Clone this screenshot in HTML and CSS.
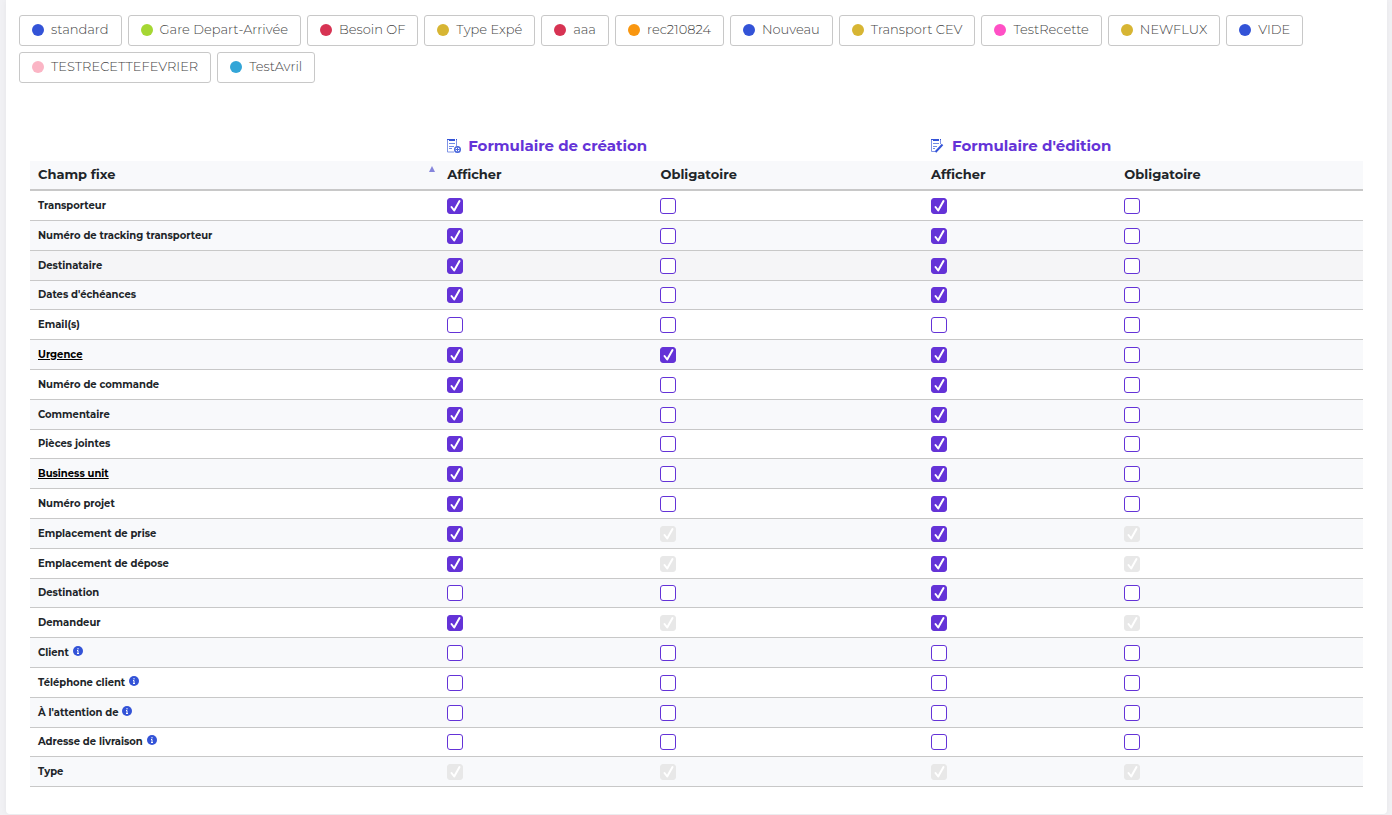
FILE: index.html
```html
<!DOCTYPE html>
<html lang="fr">
<head>
<meta charset="utf-8">
<title>Champs fixes</title>
<link rel="stylesheet" href="styles.css">
</head>
<body>
<main class="card">
  <nav class="types" aria-label="Types" id="types"></nav>
  <table class="fields">
    <colgroup><col class="col-name"><col class="col-show"><col class="col-required"><col class="col-edit-show"><col></colgroup>
    <thead>
      <tr class="groups">
        <td></td>
        <th colspan="2" scope="colgroup"><span class="group">
          <svg class="form-icon" viewBox="0 0 14 14" aria-hidden="true"><path class="sheet" d="M.5 1v12H7M9.500 1v6"/><path class="solid" d="M0 0h2v1H0zM2 0h6v2H2zM9 0h1v1H9z"/><path class="lines" d="M2 4.500h6M2 7.500h5M2 9.500h3"/><circle class="ring" cx="10.500" cy="10.500" r="2.800"/><path class="plus" d="M10.500 8.500v4M8.500 10.500h4"/></svg>
          Formulaire de création</span></th>
        <th colspan="2" scope="colgroup"><span class="group">
          <svg class="form-icon" viewBox="0 0 14 14" aria-hidden="true"><path class="sheet" d="M.5 1v11.500H4M9.500 1v4"/><path class="solid" d="M0 0h2v1H0zM2 0h6v2H2zM9 0h1v1H9z"/><path class="lines" d="M2 4.500h6M2 7.500h4M2 9.500h2"/><path class="pen" d="M4.500 13 11.500 5.500"/></svg>
          Formulaire d'édition</span></th>
      </tr>
      <tr class="heads">
        <th scope="col" aria-sort="ascending"><span class="sort">Champ fixe</span></th>
        <th scope="col">Afficher</th><th scope="col">Obligatoire</th><th scope="col">Afficher</th><th scope="col">Obligatoire</th>
      </tr>
    </thead>
    <tbody id="rows"></tbody>
  </table>
</main>
<script src="app.js"></script>
</body>
</html>
```
FILE: app.js
```js
const types = [
  ['standard', 'blue'], ['Gare Depart-Arrivée', 'green'], ['Besoin OF', 'red'],
  ['Type Expé', 'gold'], ['aaa', 'red'], ['rec210824', 'orange'], ['Nouveau', 'blue'],
  ['Transport CEV', 'gold'], ['TestRecette', 'pink'], ['NEWFLUX', 'gold'], ['VIDE', 'blue'],
  ['TESTRECETTEFEVRIER', 'rose'], ['TestAvril', 'sky']
];
document.getElementById('types').innerHTML = types.map(([name, color]) =>
  `<button type="button" class="type"><span class="dot ${color}"></span><span class="type-name">${name}</span></button>`).join('');

// One letter per box: x = checked, o = empty, d = checked and disabled
const fields = [
  ['Transporteur', 'xoxo'], ['Numéro de tracking transporteur', 'xoxo'],
  ['Destinataire', 'xoxo', 'hover'], ["Dates d'échéances", 'xoxo'], ['Email(s)', 'oooo'],
  ['Urgence', 'xxxo', 'link'], ['Numéro de commande', 'xoxo'], ['Commentaire', 'xoxo'],
  ['Pièces jointes', 'xoxo'], ['Business unit', 'xoxo', 'link'], ['Numéro projet', 'xoxo'],
  ['Emplacement de prise', 'xdxd'], ['Emplacement de dépose', 'xdxd'], ['Destination', 'ooxo'],
  ['Demandeur', 'xdxd'], ['Client', 'oooo', 'info'], ['Téléphone client', 'oooo', 'info'],
  ["À l'attention de", 'oooo', 'info'], ['Adresse de livraison', 'oooo', 'info'], ['Type', 'dddd']
];
const columns = ['création, afficher', 'création, obligatoire', 'édition, afficher', 'édition, obligatoire'];
const info = '<svg class="info" viewBox="0 0 10 10" aria-hidden="true"><circle cx="5" cy="5" r="5"/><path d="M5 2v1.400M4 4.500h1V7.500M4 7.500h2"/></svg>';
document.getElementById('rows').innerHTML = fields.map(([name, boxes, kind]) => {
  const label = kind === 'link' ? `<a href="#">${name}</a>` : name + (kind === 'info' ? ' ' + info : '');
  const cells = [...boxes].map((b, i) =>
    `<td><input type="checkbox" class="box" aria-label="${name} : ${columns[i]}"${b !== 'o' ? ' checked' : ''}${b === 'd' ? ' disabled' : ''}></td>`).join('');
  return `<tr${kind === 'hover' ? ' class="active"' : ''}><th scope="row">${label}</th>${cells}</tr>`;
}).join('');
```
FILE: styles.css
```css
* { box-sizing: border-box; }
body {
  margin: 0;
  padding: 0 5px 1px 6px;
  background: #f1f1f4;
  color: #212529;
  font-family: Montserrat, Inter, "Open Sans", sans-serif;
  font-size: 13px;
}
.card {
  padding: 15px 24px 27px;
  border-radius: 0 0 4px 4px;
  background: #fff;
  box-shadow: 0 0 6px rgba(0, 0, 0, 0.05);
}
.types {
  display: flex;
  flex-wrap: wrap;
  gap: 6px;
  margin: 0 -11px 48px;
}
.type {
  display: inline-flex;
  align-items: center;
  gap: 7px;
  height: 31px;
  padding: 0 12px 2px;
  border: 1px solid #c8c8c8;
  border-radius: 3px;
  background: #fff;
  color: #444;
  font: inherit;
  font-size: 13px;
  font-weight: 300;
}
.type-name { padding-bottom: 1px; }
.dot { width: 12px; height: 12px; border-radius: 50%; }
.blue { background: #3353d7; }
.green { background: #a5d733; }
.red { background: #d73353; }
.gold { background: #d7b533; }
.orange { background: #f9960f; }
.pink { background: #ff50c5; }
.rose { background: #fbb5c5; }
.sky { background: #33a5d7; }

.fields {
  width: 100%;
  border-collapse: separate;
  border-spacing: 0;
  table-layout: fixed;
}
.col-name { width: 30.7%; }
.col-show { width: 16%; }
.col-required { width: 20.3%; }
.col-edit-show { width: 14.5%; }
.fields th, .fields td { padding: 0 8px; text-align: left; font-weight: 700; }
.groups th, .groups td { height: 30px; }
.group {
  display: flex;
  align-items: center;
  gap: 7px;
  color: #6433d7;
  font-size: 15px;
  line-height: 18px;
}
.form-icon { width: 14px; height: 14px; fill: none; }
.form-icon .sheet { stroke: #8094e6; }
.form-icon .solid { fill: #3353d7; }
.form-icon .lines { stroke: #708be5; }
.form-icon .ring { stroke: #4563db; stroke-width: 1.4; }
.form-icon .plus { stroke: #4563db; }
.form-icon .pen { stroke: #3353d7; stroke-width: 2; }
.heads th {
  height: 30px;
  padding-bottom: 2px;
  border-bottom: 2px solid #c8c8c8;
  background: #f8f9fb;
  font-size: 13px;
}
.sort {
  display: flex;
  align-items: flex-start;
  justify-content: space-between;
  margin-right: -4px;
}
.sort::after {
  content: "";
  border: 3px solid transparent;
  border-top: 0;
  border-bottom: 6px solid #8585dc;
}
tbody th, tbody td { height: 30px; border-bottom: 1px solid #c8c8c8; }
tbody tr:nth-child(5n+4) > * { height: 29px; }
tbody tr:nth-child(even) { background: #f8f9fb; }
tbody tr.active { background: #f5f5f7; }
.fields tbody th { font-size: 10px; line-height: 16px; }
tbody th a { color: #000; }
.info { width: 10px; height: 10px; margin-left: 1px; fill: #3353d7; }
.info path { fill: none; stroke: #fff; }
.box {
  appearance: none;
  display: block;
  width: 16px;
  height: 16px;
  margin: 0;
  border: 1px solid #6433d7;
  border-radius: 3px;
  background: #fff center / 16px 16px no-repeat;
}
.box:checked {
  background-color: #6433d7;
  background-image: url("data:image/svg+xml,%3Csvg xmlns='http://www.w3.org/2000/svg' viewBox='0 0 16 16'%3E%3Cpath d='M4.500 9 7.200 12.500 12.500 3' fill='none' stroke='white' stroke-width='2' stroke-linecap='round' stroke-linejoin='round'/%3E%3C/svg%3E");
}
.box:disabled { border-color: #e8e8e8; background-color: #e8e8e8; }
```
